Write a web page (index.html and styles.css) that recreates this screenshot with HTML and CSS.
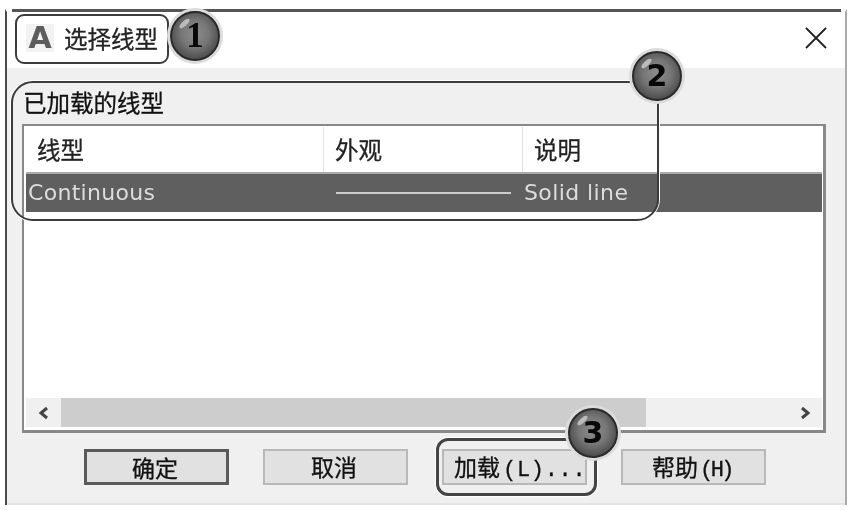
FILE: index.html
```html
<!DOCTYPE html>
<html lang="zh">
  <head>
    <meta charset="UTF-8" />
    <meta name="viewport" content="width=device-width, initial-scale=1.0" />
    <title>选择线型</title>
    <link rel="stylesheet" href="styles.css">
  </head>
  <body>
    <div class="dialog">
      <div class="titlebar">
        <span class="logo">A</span>
        <span class="title">选择线型</span>
        <svg class="close" width="24" height="24" viewBox="0 0 24 24">
          <path d="M2 2 L22 22 M22 2 L2 22" stroke="#222" stroke-width="1.8" fill="none" />
        </svg>
      </div>
      <div class="content">
        <div class="group-label">已加载的线型</div>
        <div class="listbox">
          <div class="list-head">
            <div class="col col-name">线型</div>
            <div class="col col-look">外观</div>
            <div class="col col-desc">说明</div>
          </div>
          <div class="list-row">
            <div class="cell-name">Continuous</div>
            <div class="cell-look"><span class="line-sample"></span></div>
            <div class="cell-desc">Solid line</div>
          </div>
          <div class="list-empty"></div>
          <div class="scrollbar">
            <span class="arrow">
              <svg width="14" height="14" viewBox="0 0 14 14"><path d="M10 2 L4 7 L10 12" stroke="#444" stroke-width="3" fill="none" /></svg>
            </span>
            <div class="track"><div class="thumb"></div></div>
            <span class="arrow">
              <svg width="14" height="14" viewBox="0 0 14 14"><path d="M4 2 L10 7 L4 12" stroke="#444" stroke-width="3" fill="none" /></svg>
            </span>
          </div>
        </div>
        <div class="buttons">
          <button class="btn btn-default">确定</button>
          <button class="btn">取消</button>
          <button class="btn btn-load">加载<span class="latin">(L)...</span></button>
          <button class="btn">帮助<span class="latin latin-tight">(H)</span></button>
        </div>
      </div>
    </div>

    <!-- marcas por cima do dialogo -->
    <div class="frame frame-1"></div>
    <div class="frame frame-2"></div>
    <div class="frame frame-3"></div>
    <div class="bubble bubble-1"><span class="bubble-num bubble-serif">1</span></div>
    <div class="bubble bubble-2"><span class="bubble-num">2</span></div>
    <div class="bubble bubble-3"><span class="bubble-num">3</span></div>
  </body>
</html>
```

FILE: styles.css
```css
html,
body {
  margin: 0;
  height: 511px;
  overflow: hidden;
  background: #fff;
}
body {
  position: relative;
  font-family: "Noto Sans CJK SC", "Liberation Sans", sans-serif;
  color: #111;
}
.dialog {
  position: relative;
  width: 842px;
  height: 496px;
  margin: 9px 0 0 5px;
  box-sizing: border-box;
  border-top: 3px solid transparent;
  border-left: 2px solid #4a4a4a;
  border-right: 2px solid #aaa;
  filter: blur(0.7px);
  display: flex;
  flex-direction: column;
}
.dialog::before {
  content: "";
  position: absolute;
  left: 5px;
  right: 4px;
  top: -3px;
  height: 3px;
  background: #555;
}
.titlebar {
  height: 56px;
  flex: none;
  display: flex;
  align-items: center;
  background: #fff;
  padding: 0 17px 4px 19px;
  box-sizing: border-box;
}
.logo {
  width: 28px;
  height: 28px;
  background: #f2f2f2;
  color: #5c5c5c;
  font: bold 30px/28px "DejaVu Sans", sans-serif;
  text-align: center;
  margin-right: 10px;
}
.title {
  font-size: 23.5px;
  line-height: 30px;
  color: #222;
  flex: 1;
  -webkit-text-stroke: 0.3px #222;
}
.content {
  flex: 1;
  background: #f0f0f0;
  padding: 17px 19px 0 15px;
  border-bottom: 2px solid #e4e4e4;
}
.group-label {
  font-size: 23.5px;
  line-height: 34px;
  margin-left: 1px;
  -webkit-text-stroke: 0.3px #111;
}
.listbox {
  height: 309px;
  box-sizing: border-box;
  margin-top: 5px;
  border: 2px solid #888;
  border-right-width: 3px;
  border-bottom-width: 3px;
  background: #fff;
  padding: 1px 1px 3px 2px;
  display: flex;
  flex-direction: column;
}
.list-head {
  height: 45px;
  flex: none;
  display: flex;
  font-size: 23.5px;
  line-height: 44px;
  color: #222;
  -webkit-text-stroke: 0.3px #222;
}
.col {
  box-sizing: border-box;
  padding-left: 11px;
  border-right: 1px solid #e0e0e0;
}
.col-name {
  width: 298px;
}
.col-look {
  width: 199px;
}
.col-desc {
  flex: 1;
  border-right: none;
}
.list-row {
  height: 40px;
  flex: none;
  box-sizing: border-box;
  border-top: 2px solid #aaa;
  background: #5f5f5f;
  color: #ddd;
  display: flex;
  align-items: center;
  font: 22px/38px "DejaVu Sans", sans-serif;
}
.cell-name {
  width: 310px;
  padding-left: 2px;
  box-sizing: border-box;
  letter-spacing: 0.3px;
}
.cell-look {
  width: 188px;
  flex: none;
  display: flex;
  align-items: center;
}
.line-sample {
  display: block;
  width: 175px;
  height: 2px;
  background: #ccc;
}
.cell-desc {
  flex: 1;
  letter-spacing: 0.4px;
}
.list-empty {
  flex: 1;
}
.scrollbar {
  height: 29px;
  flex: none;
  display: flex;
  align-items: center;
  background: #f0f0f0;
}
.arrow {
  width: 35px;
  flex: none;
  display: flex;
  justify-content: center;
}
.track {
  flex: 1;
  height: 100%;
}
.thumb {
  width: 585px;
  height: 100%;
  background: #cdcdcd;
}
.buttons {
  display: flex;
  gap: 34px;
  margin: 16px 0 0 62px;
}
.btn {
  width: 145px;
  height: 36px;
  box-sizing: border-box;
  padding: 0 3px 2px 0;
  border: 2px solid #b8b8b8;
  background: #e1e1e1;
  color: #111;
  font: 23px/30px "Noto Sans CJK SC", sans-serif;
  white-space: nowrap;
  -webkit-text-stroke: 0.3px #111;
}
.btn-default {
  border: 3px solid #5a5a5a;
}
.btn-load {
  text-align: left;
  padding: 0 0 2px 10px;
}
.latin {
  font: 22px/30px "Liberation Mono", monospace;
  letter-spacing: 0.7px;
  margin-left: 3px;
}
.latin-tight {
  letter-spacing: -2.5px;
  margin-left: 2px;
}
.frame {
  position: absolute;
  box-sizing: border-box;
  border: 2px solid #3c3c3c;
  border-radius: 9px;
  box-shadow: 0 0 0 1px #fff;
  filter: blur(0.4px);
}
.frame-1 {
  left: 15px;
  top: 14px;
  width: 154px;
  height: 50px;
}
.frame-2 {
  left: 11px;
  top: 81px;
  width: 648px;
  height: 140px;
  border-radius: 22px;
}
.frame-3 {
  left: 436px;
  top: 438px;
  width: 161px;
  height: 58px;
  border-width: 3px;
  border-color: #444;
  border-radius: 12px;
}
.bubble {
  position: absolute;
  width: 50px;
  height: 50px;
  border-radius: 50%;
  box-sizing: border-box;
  border: 2px solid #2a2a2a;
  background: radial-gradient(circle at 50% 45%, #8c8c8c 0%, #777 40%, #404040 85%, #222 100%);
  box-shadow: 0 0 0 3px #dcdcdc;
  display: flex;
  align-items: center;
  justify-content: center;
  filter: blur(0.4px);
}
.bubble::before {
  content: "";
  position: absolute;
  left: 6px;
  top: 8px;
  width: 13px;
  height: 5px;
  border-radius: 50%;
  background: #bbb;
  transform: rotate(-42deg);
}
.bubble-1 {
  left: 170px;
  top: 11px;
}
.bubble-2 {
  left: 632px;
  top: 51px;
}
.bubble-3 {
  left: 568px;
  top: 408px;
}
.bubble-num {
  position: relative;
  font: bold 30px/30px "DejaVu Sans", sans-serif;
  color: #080808;
}
.bubble-serif {
  font-family: "Liberation Serif", serif;
  font-size: 35px;
}
```
